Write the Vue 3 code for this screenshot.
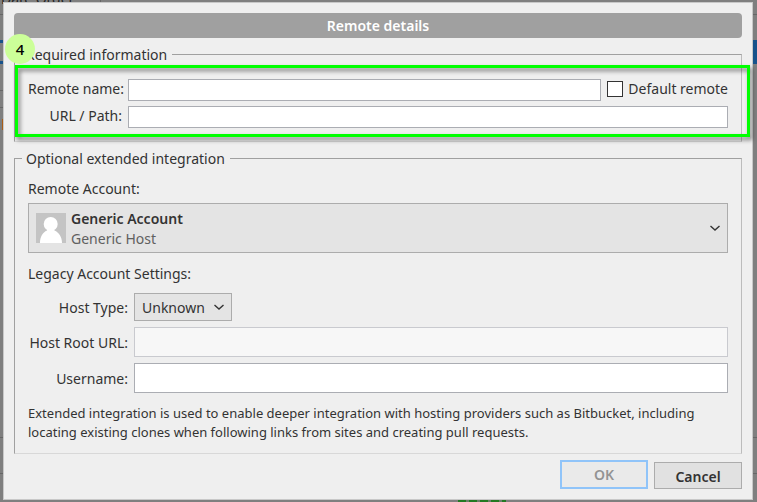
<script setup>
import { ref } from 'vue'

const remoteName = ref('')
const url = ref('')
const isDefault = ref(false)
const hostType = ref('Unknown')
const hostRoot = ref('')
const username = ref('')
</script>

<template>
  <div class="screen">
    <div class="behind" aria-hidden="true">
      <span class="behind-title">Date Order</span>
      <span class="behind-divider"></span>
      <span class="behind-rule"></span>
      <span class="behind-select"></span>
      <span class="behind-row"></span>
      <span class="behind-left"></span>
      <span class="behind-footer"></span>
      <span class="behind-mark"></span>
      <span class="behind-green"></span>
    </div>

    <form class="dialog" @submit.prevent>
      <h1 class="title">Remote details</h1>

      <fieldset class="group required">
        <legend>Required information</legend>
        <div class="fields">
          <label for="name">Remote name:</label>
          <div class="name-row">
            <input id="name" v-model="remoteName" class="text short" type="text" />
            <label class="check">
              <input v-model="isDefault" type="checkbox" />
              <span>Default remote</span>
            </label>
          </div>
          <label for="url">URL / Path:</label>
          <input id="url" v-model="url" class="text short" type="text" />
          <div class="highlight"></div>
          <span class="step">4</span>
        </div>
      </fieldset>

      <fieldset class="group optional">
        <legend>Optional extended integration</legend>
        <p class="caption" id="account-label">Remote Account:</p>
        <button class="account" type="button" aria-labelledby="account-label account-name">
          <svg class="avatar" viewBox="0 0 30 30">
            <rect width="30" height="30" fill="#c4c4c4" />
            <circle cx="14.700" cy="11" r="7" fill="#fff" />
            <path d="M4 30C4 24 6.500 19.500 11 17.500L12 15H17.500L18.500 17.500C23 19.500 26 24 26 30Z" fill="#fff" />
          </svg>
          <span class="account-text">
            <strong id="account-name">Generic Account</strong>
            <span>Generic Host</span>
          </span>
          <svg class="chevron" viewBox="0 0 10 6"><path d="M.5 1L5 5L9.500 1" /></svg>
        </button>

        <p class="caption legacy">Legacy Account Settings:</p>
        <div class="settings">
          <label for="host">Host Type:</label>
          <div class="select-wrap">
            <select id="host" v-model="hostType">
              <option>Unknown</option>
            </select>
            <svg class="chevron" viewBox="0 0 10 6"><path d="M.5 1L5 5L9.500 1" /></svg>
          </div>
          <label for="root">Host Root URL:</label>
          <input id="root" v-model="hostRoot" class="text" type="text" disabled />
          <label for="user">Username:</label>
          <input id="user" v-model="username" class="text" type="text" />
        </div>
        <p class="note">Extended integration is used to enable deeper integration with hosting providers such as Bitbucket, including locating existing clones when following links from sites and creating pull requests.</p>
      </fieldset>

      <div class="actions">
        <button class="ok" type="submit" disabled>OK</button>
        <button class="cancel" type="button">Cancel</button>
      </div>
    </form>
  </div>
</template>

<style>
body {
  margin: 0;
  background: #7f7f7f;
}
</style>

<style scoped>
* {
  box-sizing: border-box;
}
.screen {
  position: relative;
  min-height: 100vh;
  padding: 2px 4px 2px 3px;
  overflow: hidden;
  background: #7f7f7f;
  color: #333;
  font: 14px/20px "Noto Sans", "Open Sans", sans-serif;
}
.behind {
  position: absolute;
  inset: 0;
  overflow: hidden;
}
.behind span {
  position: absolute;
}
.behind-title {
  top: -11px;
  left: 1px;
  color: #222;
}
.behind-divider {
  top: 0;
  left: 100px;
  width: 1px;
  height: 2px;
  background: #666;
}
.behind-rule {
  top: 14px;
  left: 0;
  right: 0;
  height: 1px;
  background: #666;
}
.behind-select {
  top: 40px;
  right: 0;
  width: 5px;
  height: 24px;
  background: #18528b;
}
.behind-row {
  top: 40px;
  left: 0;
  width: 4px;
  height: 24px;
  border: solid #18528b;
  border-width: 3px 0;
}
.behind-left {
  top: 90px;
  left: 0;
  width: 4px;
  height: 18px;
  border: solid #666;
  border-width: 1px 0;
}
.behind-footer {
  top: 437px;
  left: 0;
  right: 0;
  height: 37px;
  border: solid #666;
  border-width: 1px 0;
}
.behind-mark {
  top: 119px;
  left: 2px;
  width: 1px;
  height: 11px;
  background: #a85c16;
}
.behind-green {
  bottom: 0;
  left: 458px;
  width: 48px;
  height: 2px;
  background: repeating-linear-gradient(90deg, #237a23 0 8px, #6a7f6a 8px 11px);
}
.dialog {
  position: relative;
  padding: 10px;
  border: 1px solid #c8c8c8;
  background: #efefef;
}
.title {
  height: 25px;
  margin: 0 0 5px;
  border-radius: 4px;
  background: #a0a0a0;
  color: #fff;
  font-size: 14px;
  line-height: 25px;
  font-weight: 600;
  text-align: center;
}
.group {
  min-width: 0;
  margin: 0;
  padding: 0 13px;
  border: 1px solid;
  border-color: #a0a0a0 #bcbcbc #d8d8d8 #a0a0a0;
}
.group legend {
  margin-left: -6px;
  padding: 2px 5px 0 4px;
}
.required {
  padding-top: 14px;
  padding-bottom: 13px;
}
.fields {
  position: relative;
  display: grid;
  grid-template-columns: 94px 1fr;
  gap: 5px 6px;
  align-items: center;
}
.fields > label,
.settings > label {
  text-align: right;
  white-space: nowrap;
}
.fields > label,
.check span {
  padding-bottom: 2px;
}
.settings > label {
  padding-top: 2px;
}
.text {
  width: 100%;
  min-width: 0;
  height: 30px;
  margin: 0;
  padding: 0 4px;
  border: 1px solid #abadb3;
  border-radius: 0;
  background: #fff;
  color: #333;
  font: inherit;
}
.text.short {
  height: 22px;
}
.text:disabled {
  border-color: #c9cacf;
  background: #f7f7f7;
}
.name-row {
  display: flex;
  align-items: center;
  gap: 6px;
  height: 22px;
}
.name-row .text {
  flex: 1;
}
.check {
  display: flex;
  align-items: center;
  gap: 5px;
  white-space: nowrap;
}
.check input {
  appearance: none;
  width: 16px;
  height: 16px;
  margin: 0 0 2px;
  border: 1px solid #333;
  background: #fff;
}
.check input:checked {
  box-shadow: inset 0 0 0 3px #fff;
  background: #333;
}
.highlight {
  position: absolute;
  inset: -14px -22px -9px -13px;
  border: 3px solid #00ff00;
  filter: drop-shadow(2px 3px 2px rgba(0, 0, 0, 0.5));
  pointer-events: none;
}
.step {
  position: absolute;
  top: -45px;
  left: -23px;
  width: 30px;
  height: 30px;
  border-radius: 50%;
  background: #ccff99;
  color: #000;
  font: 500 15px/30px "Noto Sans", sans-serif;
  text-align: center;
}
.optional {
  margin-top: 5px;
  padding-top: 10px;
  padding-bottom: 11px;
}
.caption {
  margin: 0 0 4px;
}
.account {
  display: flex;
  align-items: center;
  gap: 5px;
  width: 100%;
  height: 50px;
  padding: 0 7px;
  border: 1px solid #acacac;
  border-radius: 0;
  background: #e4e4e4;
  color: #333;
  font: inherit;
  text-align: left;
}
.avatar {
  width: 30px;
  height: 30px;
}
.account-text {
  display: flex;
  flex: 1;
  flex-direction: column;
  padding-top: 2px;
}
.account-text strong {
  font-weight: 600;
}
.account-text span {
  color: #606060;
}
.chevron {
  width: 10px;
  height: 6px;
  fill: none;
  stroke: #333;
  stroke-width: 1.4;
}
.legacy {
  margin: 11px 0 9px;
}
.settings {
  display: grid;
  grid-template-columns: 100px 1fr;
  gap: 6px;
  align-items: center;
}
.select-wrap {
  position: relative;
  justify-self: start;
}
.select-wrap select {
  display: block;
  appearance: none;
  width: 98px;
  height: 28px;
  padding: 2px 24px 0 7px;
  border: 1px solid #acacac;
  border-radius: 0;
  background: #e4e4e4;
  color: #333;
  font: inherit;
}
.select-wrap .chevron {
  position: absolute;
  top: 11px;
  right: 8px;
  pointer-events: none;
}
.note {
  margin: 11px 0 0;
  font-size: 13px;
  line-height: 19px;
}
.actions {
  display: flex;
  justify-content: flex-end;
  align-items: flex-end;
  gap: 6px;
  margin-top: 6px;
}
.actions button {
  width: 88px;
  height: 27px;
  padding: 2px 0 0;
  border: 1px solid #acacac;
  border-radius: 0;
  background: #e1e1e1;
  color: #333;
  font: 600 14px/20px "Noto Sans", sans-serif;
}
.actions .ok {
  height: 29px;
  padding: 0;
  border: 2px solid #90c4f9;
  background: #eaeaea;
  color: #939393;
}
</style>
